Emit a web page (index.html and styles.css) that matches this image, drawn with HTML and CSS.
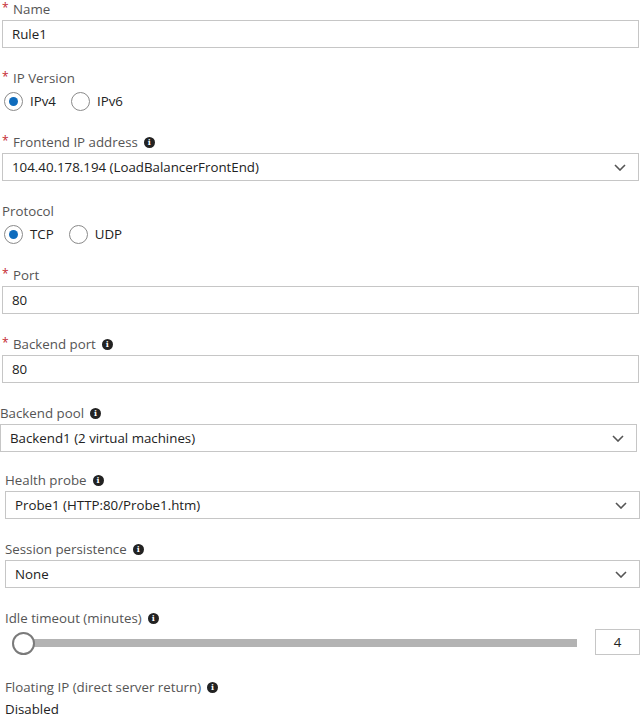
FILE: index.html
```html
<!DOCTYPE html>
<html>
<head>
<meta charset="utf-8">
<link rel="stylesheet" href="styles.css">
</head>
<body>
<form class="form">
  <div class="group group-a">
    <div class="field first">
      <div class="label req"><span class="star">*</span>Name</div>
      <div class="box">Rule1</div>
    </div>
    <div class="field choice">
      <div class="label req"><span class="star">*</span>IP Version</div>
      <div class="radios">
        <span class="radio checked"></span><span class="rtext">IPv4</span>
        <span class="radio"></span><span class="rtext">IPv6</span>
      </div>
    </div>
    <div class="field">
      <div class="label req"><span class="star">*</span>Frontend IP address<span class="info">i</span></div>
      <div class="box select">104.40.178.194 (LoadBalancerFrontEnd)<svg class="chev" width="12" height="7" viewBox="0 0 12 7"><path d="M1 1l5 5 5-5" fill="none" stroke="#555" stroke-width="1.6"/></svg></div>
    </div>
    <div class="field choice">
      <div class="label">Protocol</div>
      <div class="radios">
        <span class="radio checked"></span><span class="rtext">TCP</span>
        <span class="radio"></span><span class="rtext">UDP</span>
      </div>
    </div>
    <div class="field">
      <div class="label req"><span class="star">*</span>Port</div>
      <div class="box">80</div>
    </div>
    <div class="field">
      <div class="label req"><span class="star">*</span>Backend port<span class="info">i</span></div>
      <div class="box">80</div>
    </div>
  </div>
  <div class="group group-b">
    <div class="field">
      <div class="label">Backend pool<span class="info">i</span></div>
      <div class="box select">Backend1 (2 virtual machines)<svg class="chev" width="12" height="7" viewBox="0 0 12 7"><path d="M1 1l5 5 5-5" fill="none" stroke="#555" stroke-width="1.6"/></svg></div>
    </div>
  </div>
  <div class="group group-c">
    <div class="field tight">
      <div class="label">Health probe<span class="info">i</span></div>
      <div class="box select">Probe1 (HTTP:80/Probe1.htm)<svg class="chev" width="12" height="7" viewBox="0 0 12 7"><path d="M1 1l5 5 5-5" fill="none" stroke="#555" stroke-width="1.6"/></svg></div>
    </div>
    <div class="field">
      <div class="label">Session persistence<span class="info">i</span></div>
      <div class="box select">None<svg class="chev" width="12" height="7" viewBox="0 0 12 7"><path d="M1 1l5 5 5-5" fill="none" stroke="#555" stroke-width="1.6"/></svg></div>
    </div>
    <div class="field">
      <div class="label">Idle timeout (minutes)<span class="info">i</span></div>
      <div class="slider-row">
        <div class="slider">
          <span class="thumb"></span>
          <span class="track"></span>
        </div>
        <div class="numbox">4</div>
      </div>
    </div>
    <div class="field wide">
      <div class="label">Floating IP (direct server return)<span class="info">i</span></div>
      <div class="value">Disabled</div>
    </div>
  </div>
</form>
</body>
</html>
```

FILE: styles.css
```css
* { box-sizing: border-box; }
html, body { margin: 0; padding: 0; background: #fff; }
body {
  font-family: "Segoe UI", "Open Sans", "Noto Sans", sans-serif;
  font-size: 13.3px;
  color: #222;
  width: 644px;
  height: 718px;
  overflow: hidden;
}
.form { display: flex; flex-direction: column; }
.group { display: flex; flex-direction: column; }
.group-a { padding: 0 5px 0 2px; }
.group-b { padding: 0 7px 0 0; }
.group-c { padding: 0 4px 0 5px; }

.field { margin-top: 21px; }
.field.first { margin-top: 0; }
.field.choice + .field { margin-top: 22px; }
.field.tight { margin-top: 19px; }
.field.wide { margin-top: 23px; }

.label {
  display: flex;
  align-items: center;
  height: 18px;
  line-height: 18px;
  color: #555;
  margin-bottom: 2px;
  white-space: nowrap;
}
.star {
  color: #c4262e;
  width: 11px;
  font-size: 12px;
  align-self: flex-start;
  line-height: 14px;
  padding-top: 1px;
}
.info {
  display: inline-flex;
  align-items: center;
  justify-content: center;
  width: 11px;
  height: 11px;
  border-radius: 50%;
  background: #222;
  color: #fff;
  font-family: "DejaVu Serif", serif;
  font-weight: bold;
  font-size: 8px;
  line-height: 11px;
  margin-left: 6px;
}

.box {
  position: relative;
  height: 28px;
  border: 1px solid #c6c6c6;
  padding: 0 9px;
  display: flex;
  align-items: center;
  color: #222;
  white-space: nowrap;
}
.select { padding-right: 30px; }
.chev { position: absolute; right: 12px; top: 10px; }

.radios {
  display: flex;
  align-items: center;
  height: 20px;
  margin-top: 4px;
  padding-left: 2px;
}
.radio {
  width: 19px;
  height: 19px;
  border: 1px solid #8a8a8a;
  border-radius: 50%;
  display: flex;
  align-items: center;
  justify-content: center;
  flex: none;
}
.radio.checked::after {
  content: "";
  width: 9px;
  height: 9px;
  border-radius: 50%;
  background: #0f6cbd;
}
.rtext { margin-left: 7px; margin-right: 15px; color: #222; }

.slider-row {
  display: flex;
  align-items: center;
  height: 26px;
}
.slider {
  flex: 1;
  display: flex;
  align-items: center;
  height: 26px;
}
.thumb {
  width: 23px;
  height: 23px;
  border-radius: 50%;
  border: 2px solid #7a7a7a;
  background: #fff;
  margin-left: 7px;
  margin-top: 2px;
  flex: none;
  position: relative;
  z-index: 1;
}
.track {
  height: 8px;
  background: #b3b3b3;
  margin-left: -3px;
  margin-top: 2px;
  width: 545px;
  flex: none;
}
.numbox {
  width: 45px;
  height: 26px;
  border: 1px solid #c6c6c6;
  display: flex;
  align-items: center;
  justify-content: center;
  color: #222;
}
.value { margin-top: 6px; color: #222; line-height: 14px; }
```
